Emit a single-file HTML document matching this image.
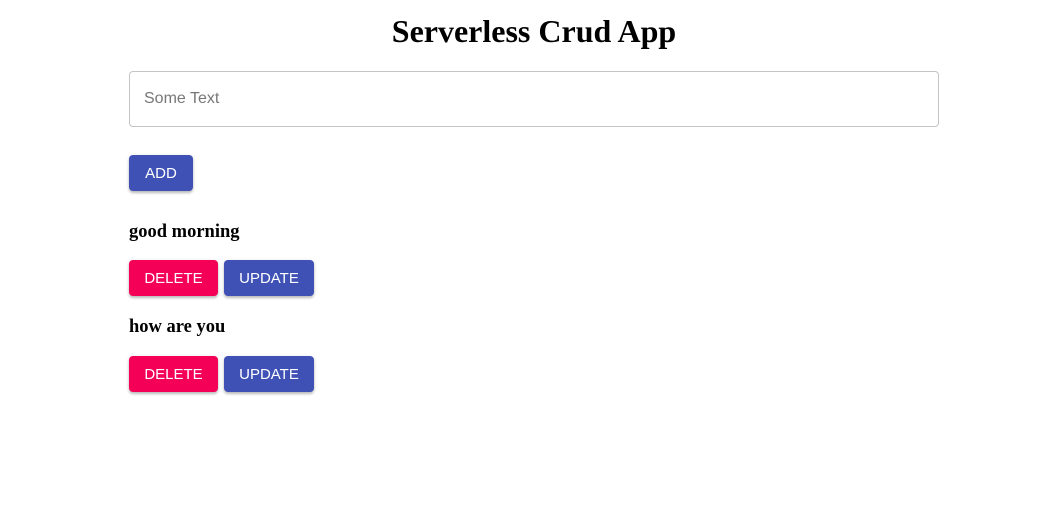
<!DOCTYPE html>
<html><head><style>
body{margin:0;width:1038px;height:518px;background:#fff;position:relative;font-family:"Liberation Serif",serif;}
h1{position:absolute;left:0;width:1068px;top:12px;margin:0;text-align:center;font-size:32px;font-weight:bold;line-height:38px;}
.inp{position:absolute;left:129px;top:71px;width:808px;height:54px;border:1px solid #c4c4c4;border-radius:4px;}
.inp span{position:absolute;left:14px;top:18px;font:16px "Liberation Sans",sans-serif;color:#777;}
.btn{position:absolute;height:36px;border-radius:4px;color:#fff;font:15px "Liberation Sans",sans-serif;line-height:38px;text-align:center;box-shadow:0 2px 2px rgba(0,0,0,.2),0 1px 5px rgba(0,0,0,.12);}
.b{background:#3f51b5}.r{background:#f50057}
.t{position:absolute;left:129px;font-size:18.5px;font-weight:bold;}
</style></head><body>
<h1>Serverless Crud App</h1>
<div class="inp"><span>Some Text</span></div>
<div class="btn b" style="left:129px;top:155px;width:64px">ADD</div>
<div class="t" style="top:222px">good morning</div>
<div class="btn r" style="left:129px;top:260px;width:89px">DELETE</div>
<div class="btn b" style="left:224px;top:260px;width:90px">UPDATE</div>
<div class="t" style="top:317px">how are you</div>
<div class="btn r" style="left:129px;top:356px;width:89px">DELETE</div>
<div class="btn b" style="left:224px;top:356px;width:90px">UPDATE</div>
</body></html>
